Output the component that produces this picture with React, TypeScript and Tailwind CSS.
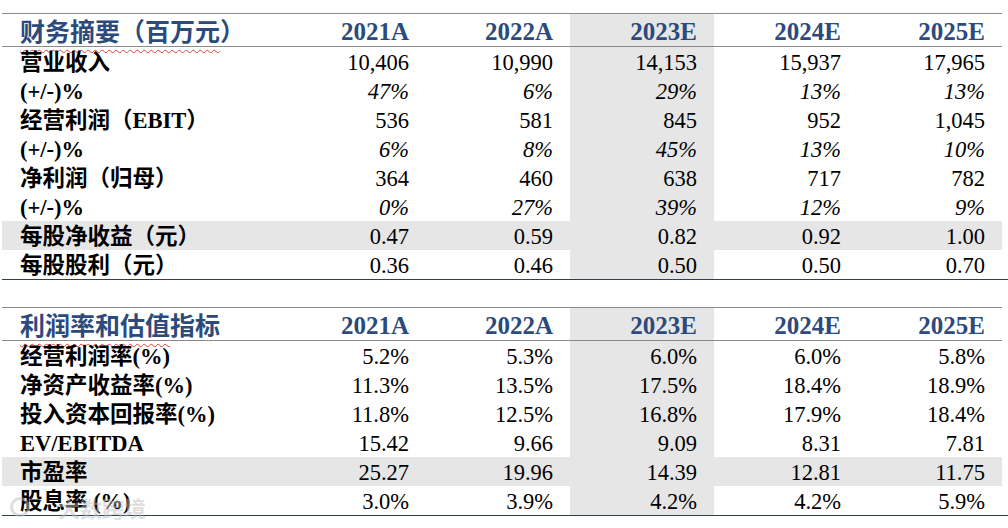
import React from "react";

type Row = { label: string; values: string[]; italic?: boolean; shaded?: boolean };

const years = ["2021A", "2022A", "2023E", "2024E", "2025E"];

const finance: Row[] = [
  { label: "营业收入", values: ["10,406", "10,990", "14,153", "15,937", "17,965"] },
  { label: "(+/-)%", values: ["47%", "6%", "29%", "13%", "13%"], italic: true },
  { label: "经营利润（EBIT）", values: ["536", "581", "845", "952", "1,045"] },
  { label: "(+/-)%", values: ["6%", "8%", "45%", "13%", "10%"], italic: true },
  { label: "净利润（归母）", values: ["364", "460", "638", "717", "782"] },
  { label: "(+/-)%", values: ["0%", "27%", "39%", "12%", "9%"], italic: true },
  { label: "每股净收益（元）", values: ["0.47", "0.59", "0.82", "0.92", "1.00"], shaded: true },
  { label: "每股股利（元）", values: ["0.36", "0.46", "0.50", "0.50", "0.70"] },
];

const ratios: Row[] = [
  { label: "经营利润率(%)", values: ["5.2%", "5.3%", "6.0%", "6.0%", "5.8%"] },
  { label: "净资产收益率(%)", values: ["11.3%", "13.5%", "17.5%", "18.4%", "18.9%"] },
  { label: "投入资本回报率(%)", values: ["11.8%", "12.5%", "16.8%", "17.9%", "18.4%"] },
  { label: "EV/EBITDA", values: ["15.42", "9.66", "9.09", "8.31", "7.81"] },
  { label: "市盈率", values: ["25.27", "19.96", "14.39", "12.81", "11.75"], shaded: true },
  { label: "股息率 (%)", values: ["3.0%", "3.9%", "4.2%", "4.2%", "5.9%"] },
];

const font = "font-['Liberation_Serif','Noto_Sans_CJK_SC',serif]";

const Table = ({ title, underlined, rows }: { title: string; underlined: string; rows: Row[] }) => (
  <div className="grid grid-cols-[280px_repeat(5,144px)] border-b border-[#2f3f58]">
    <div className="h-[34px] flex items-center pl-[18px] pt-[4px] border-y border-[#8a8a8a] text-[25px] font-bold text-[#2c4a7c]">
      <span className="underline decoration-wavy decoration-[#e0403a] decoration-1 underline-offset-[8px]">{underlined}</span>
      <span>{title.slice(underlined.length)}</span>
    </div>
    {years.map((y) => (
      <div
        key={y}
        className={`h-[34px] flex items-center justify-end pr-[17px] pt-[3px] border-y border-[#8a8a8a] text-[25px] font-bold text-[#2c4a7c] ${
          y === "2023E" ? "bg-[#e6e6e6]" : ""
        }`}
      >
        {y}
      </div>
    ))}
    {rows.map((r, i) => (
      <React.Fragment key={i}>
        <div className={`h-[29px] flex items-center pl-[18px] pt-[3px] font-bold text-black ${r.shaded ? "bg-[#e6e6e6]" : ""}`}>
          {r.label}
        </div>
        {r.values.map((v, j) => (
          <div
            key={j}
            className={`h-[29px] flex items-center justify-end pr-[17px] pt-[3px] text-black ${r.italic ? "italic" : ""} ${
              r.shaded || j === 2 ? "bg-[#e6e6e6]" : ""
            }`}
          >
            {v}
          </div>
        ))}
      </React.Fragment>
    ))}
  </div>
);

export default function App() {
  return (
    <div className={`relative w-[1008px] h-[528px] bg-white overflow-hidden pt-[13px] pl-[2px] text-[22.5px] leading-none ${font}`}>
      <Table title="财务摘要（百万元）" underlined="财务摘要（百万元" rows={finance} />
      <div className="h-[27px]" />
      <Table title="利润率和估值指标" underlined="利润率和估值" rows={ratios} />
      <div className="absolute left-[10px] top-[496px] flex items-center gap-[6px] text-[22px] font-bold text-[rgba(190,190,190,0.5)] font-['Noto_Sans_CJK_SC',sans-serif] pointer-events-none">
        <span className="w-[20px] h-[20px] rounded-full border-[3px] border-[rgba(190,190,190,0.5)]" />
        <span className="ml-[22px]">大数跨境</span>
      </div>
    </div>
  );
}
